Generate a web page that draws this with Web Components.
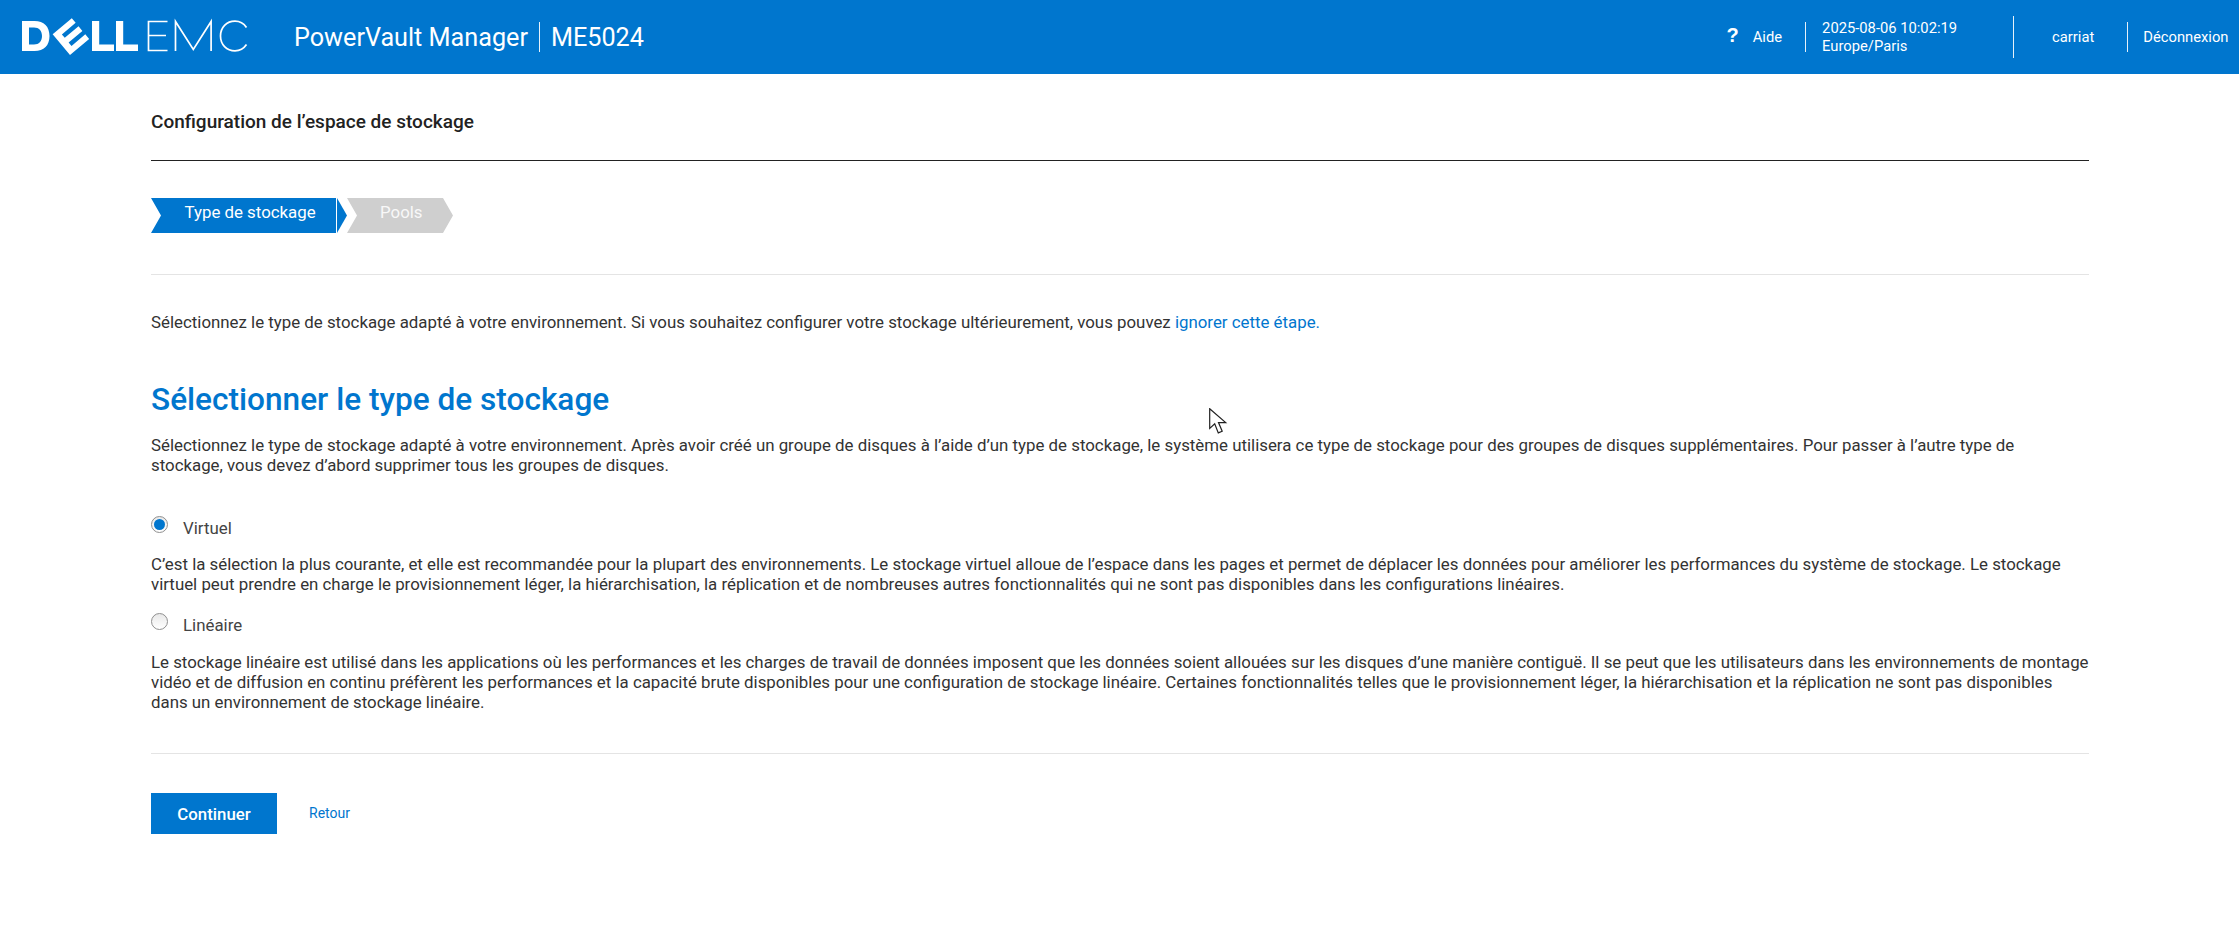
<!DOCTYPE html>
<html lang="fr"><head><meta charset="utf-8"><title>PowerVault Manager</title>
<style>
html,body{margin:0;padding:0;background:#fff;font-family:Roboto,"Liberation Sans",sans-serif;color:#333}
#cursor{position:absolute;left:1209px;top:408px;width:20px;height:27px;pointer-events:none}
</style></head><body>
<app-header></app-header>
<config-page></config-page>
<svg id="cursor" viewBox="0 0 20 27"><path d="M.7.7V20.500l5-4.600 3.600 9 3.900-1.600-3.700-8.700h7.200z" fill="#fff" stroke="#222" stroke-width="1.200" stroke-linejoin="miter"/></svg>
<script>
function def(name,html){customElements.define(name,class extends HTMLElement{constructor(){super();this.attachShadow({mode:'open'}).innerHTML=html(this)}})}
def('dell-logo',()=>`<style>:host{display:block;width:232px;height:40px;flex:none}svg{display:block}</style>
<svg width="232" height="40" viewBox="20 17 232 40" aria-label="Dell EMC">
<path d="M22 21h12.500c9.500 0 15 5.500 15 15s-5.500 15-15 15H22zM29 27.500v17h5c5 0 8-3.300 8-8.500s-3-8.500-8-8.500z" fill="#fff" fill-rule="evenodd"/>
<path transform="translate(70 55) rotate(-40)" d="M0 0V-27H25V-21H7V-16.500H25V-10.500H7V-6H25V0Z" fill="#fff"/>
<path d="M92 21h7.200v23.500H114V51H92zM116 21h7.200v23.500H138V51h-22z" fill="#fff"/>
<g fill="none" stroke="#fff" stroke-width="1.700"><path d="M167.500 21.500h-19v29h19M148.500 35.500h17.500"/><path d="M175.500 51V21.500l17.800 28 17.800-28V51"/><path d="M246.500 27.500c-2.700-4-6.800-6.300-11.500-6.300-8.500 0-14.500 6.300-14.500 14.800s6 14.800 14.500 14.800c4.700 0 8.800-2.300 11.500-6.300"/></g>
</svg>`);
def('head-sep',()=>`<style>:host{display:block;width:1px;height:30px;background:#e6f1fa;flex:none}:host([tall]){height:42px}</style>`);
def('head-item',()=>`<style>:host{display:block;font-size:14.75px;line-height:18px;color:#fff;white-space:nowrap}</style><slot></slot>`);
def('app-header',()=>`<style>:host{display:flex;align-items:center;height:74px;background:#0076ce;color:#fff;padding-left:20px;box-sizing:border-box;position:relative}
.prod{display:flex;align-items:center;margin-left:42px;font-size:25.2px}
.prod head-sep{margin:0 11px}
.r{margin-left:auto;display:flex;align-items:center}
.q{font-size:20px;font-weight:700;margin-right:14px;margin-top:-3px;font-family:"Liberation Sans",sans-serif}
</style>
<dell-logo></dell-logo>
<div class="prod"><span>PowerVault Manager</span><head-sep></head-sep><span>ME5024</span></div>
<div class="r">
<span class="q">?</span><head-item style="margin-right:23px">Aide</head-item><head-sep style="margin-right:16px"></head-sep>
<head-item style="width:191px">2025-08-06 10:02:19<br>Europe/Paris</head-item><head-sep tall style="margin-right:38px"></head-sep>
<head-item style="margin-right:33px">carriat</head-item><head-sep style="margin-right:15px"></head-sep>
<head-item style="margin-right:10.500px">Déconnexion</head-item></div>`);
def('wizard-steps',()=>`<style>:host{display:flex;height:35px;align-items:stretch;font-size:16.85px;color:#fff}
.a{width:185px;background:#0076ce;clip-path:polygon(0 0,100% 0,100% 100%,0 100%,10px 50%);padding-left:33.500px;box-sizing:border-box;line-height:29px}
.t{width:10px;margin-left:1px;background:#0076ce;clip-path:polygon(0 0,100% 50%,0 100%)}
.b{width:106px;background:#cfcfcf;clip-path:polygon(0 0,96px 0,100% 50%,96px 100%,0 100%,10px 50%);padding-left:33px;box-sizing:border-box;line-height:29px;color:#f8f8f8}
</style><div class="a">Type de stockage</div><div class="t"></div><div class="b">Pools</div>`);
def('radio-option',(h)=>`<style>:host{display:flex;align-items:center;font-size:16.85px;line-height:20px;color:#444;height:20px}
.r{width:17px;height:17px;box-sizing:border-box;border-radius:50%;border:1px solid #8f8f8f;background:linear-gradient(#e9e9e9,#fff);margin-right:15px;margin-top:-7px;display:flex;align-items:center;justify-content:center}
.d{width:11px;height:11px;border-radius:50%;background:#0076ce;display:none}
:host([checked]) .d{display:block}
</style><span class="r"><span class="d"></span></span><slot></slot>`);
def('config-page',()=>`<style>:host{display:block;padding:0 150px 0 151px;font-size:16.85px;line-height:20px;color:#333}
h1{font-size:19px;font-weight:500;line-height:24px;color:#222;margin:0;padding:36px 0 26px;border-bottom:1px solid #222}
wizard-steps{margin-top:37px}
hr{border:0;height:1px;background:#e4e4e4;margin:0}
.h1r{margin-top:41px}
p{margin:0;white-space:nowrap}
a{color:#0076ce;text-decoration:none}
h2{font-size:31.6px;font-weight:500;line-height:40px;color:#0076ce;margin:0}
.btns{display:flex;align-items:center;margin-top:39px}
button{width:126px;height:41px;border:0;background:#0076ce;color:#fff;font:500 16.8px Roboto,sans-serif;padding:0}
.ret{font-size:14px;margin-left:32px;margin-top:-1px}
</style>
<h1>Configuration de l’espace de stockage</h1>
<wizard-steps></wizard-steps>
<hr class="h1r">
<p style="margin-top:37px">Sélectionnez le type de stockage adapté à votre environnement. Si vous souhaitez configurer votre stockage ultérieurement, vous pouvez <a href="#">ignorer cette étape.</a></p>
<h2 style="margin-top:48px">Sélectionner le type de stockage</h2>
<p style="margin-top:15px">Sélectionnez le type de stockage adapté à votre environnement. Après avoir créé un groupe de disques à l’aide d’un type de stockage, le système utilisera ce type de stockage pour des groupes de disques supplémentaires. Pour passer à l’autre type de <br>stockage, vous devez d’abord supprimer tous les groupes de disques.</p>
<radio-option checked style="margin-top:43px">Virtuel</radio-option>
<p style="margin-top:16px">C’est la sélection la plus courante, et elle est recommandée pour la plupart des environnements. Le stockage virtuel alloue de l’espace dans les pages et permet de déplacer les données pour améliorer les performances du système de stockage. Le stockage <br>virtuel peut prendre en charge le provisionnement léger, la hiérarchisation, la réplication et de nombreuses autres fonctionnalités qui ne sont pas disponibles dans les configurations linéaires.</p>
<radio-option style="margin-top:21px">Linéaire</radio-option>
<p style="margin-top:17px">Le stockage linéaire est utilisé dans les applications où les performances et les charges de travail de données imposent que les données soient allouées sur les disques d’une manière contiguë. Il se peut que les utilisateurs dans les environnements de montage <br>vidéo et de diffusion en continu préfèrent les performances et la capacité brute disponibles pour une configuration de stockage linéaire. Certaines fonctionnalités telles que le provisionnement léger, la hiérarchisation et la réplication ne sont pas disponibles <br>dans un environnement de stockage linéaire.</p>
<hr style="margin-top:41px">
<div class="btns"><button>Continuer</button><a class="ret" href="#">Retour</a></div>`);
</script>
</body></html>
